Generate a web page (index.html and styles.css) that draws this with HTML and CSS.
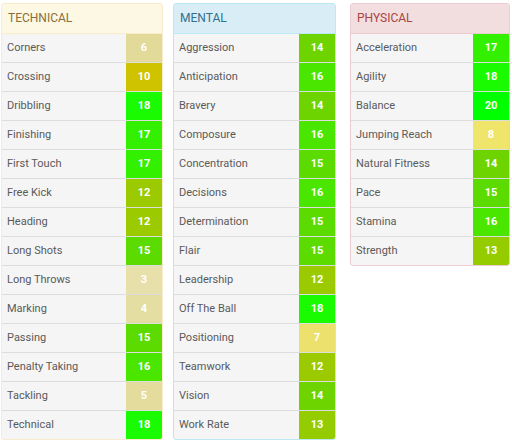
FILE: index.html
```html
<!DOCTYPE html>
<html>
<head>
<meta charset="utf-8">
<link rel="stylesheet" href="styles.css">
</head>
<body>
<div class="wrap">
  <div class="panel tech">
    <div class="head">TECHNICAL</div>
    <div class="row"><span class="lbl">Corners</span><span class="val v6">6</span></div>
    <div class="row"><span class="lbl">Crossing</span><span class="val v10">10</span></div>
    <div class="row"><span class="lbl">Dribbling</span><span class="val v18">18</span></div>
    <div class="row"><span class="lbl">Finishing</span><span class="val v17">17</span></div>
    <div class="row"><span class="lbl">First Touch</span><span class="val v17">17</span></div>
    <div class="row"><span class="lbl">Free Kick</span><span class="val v12">12</span></div>
    <div class="row"><span class="lbl">Heading</span><span class="val v12">12</span></div>
    <div class="row"><span class="lbl">Long Shots</span><span class="val v15">15</span></div>
    <div class="row"><span class="lbl">Long Throws</span><span class="val v3">3</span></div>
    <div class="row"><span class="lbl">Marking</span><span class="val v4">4</span></div>
    <div class="row"><span class="lbl">Passing</span><span class="val v15">15</span></div>
    <div class="row"><span class="lbl">Penalty Taking</span><span class="val v16">16</span></div>
    <div class="row"><span class="lbl">Tackling</span><span class="val v5">5</span></div>
    <div class="row"><span class="lbl">Technical</span><span class="val v18">18</span></div>
  </div>
  <div class="panel ment">
    <div class="head">MENTAL</div>
    <div class="row"><span class="lbl">Aggression</span><span class="val v14">14</span></div>
    <div class="row"><span class="lbl">Anticipation</span><span class="val v16">16</span></div>
    <div class="row"><span class="lbl">Bravery</span><span class="val v14">14</span></div>
    <div class="row"><span class="lbl">Composure</span><span class="val v16">16</span></div>
    <div class="row"><span class="lbl">Concentration</span><span class="val v15">15</span></div>
    <div class="row"><span class="lbl">Decisions</span><span class="val v16">16</span></div>
    <div class="row"><span class="lbl">Determination</span><span class="val v15">15</span></div>
    <div class="row"><span class="lbl">Flair</span><span class="val v15">15</span></div>
    <div class="row"><span class="lbl">Leadership</span><span class="val v12">12</span></div>
    <div class="row"><span class="lbl">Off The Ball</span><span class="val v18">18</span></div>
    <div class="row"><span class="lbl">Positioning</span><span class="val v7">7</span></div>
    <div class="row"><span class="lbl">Teamwork</span><span class="val v12">12</span></div>
    <div class="row"><span class="lbl">Vision</span><span class="val v14">14</span></div>
    <div class="row"><span class="lbl">Work Rate</span><span class="val v13">13</span></div>
  </div>
  <div class="panel phys">
    <div class="head">PHYSICAL</div>
    <div class="row"><span class="lbl">Acceleration</span><span class="val v17">17</span></div>
    <div class="row"><span class="lbl">Agility</span><span class="val v18">18</span></div>
    <div class="row"><span class="lbl">Balance</span><span class="val v20">20</span></div>
    <div class="row"><span class="lbl">Jumping Reach</span><span class="val v8">8</span></div>
    <div class="row"><span class="lbl">Natural Fitness</span><span class="val v14">14</span></div>
    <div class="row"><span class="lbl">Pace</span><span class="val v15">15</span></div>
    <div class="row"><span class="lbl">Stamina</span><span class="val v16">16</span></div>
    <div class="row"><span class="lbl">Strength</span><span class="val v13">13</span></div>
  </div>
</div>
</body>
</html>
```
FILE: styles.css
```css
* { box-sizing: border-box; }
body {
  margin: 0;
  background: #fff;
  font-family: Roboto, "Liberation Sans", sans-serif;
}
.wrap {
  display: flex;
  align-items: flex-start;
  padding: 3px 0 0 1px;
}
.panel {
  border: 1px solid #ddd;
  border-radius: 3px;
  background: #f5f5f5;
  overflow: hidden;
}
.tech { width: 162px; border-color: #faebcc; }
.ment { width: 163px; margin-left: 10px; border-color: #bce8f1; }
.phys { width: 160px; margin-left: 14px; border-color: #ebccd1; }
.head {
  height: 30px;
  line-height: 29px;
  padding-left: 6px;
  font-size: 12px;
  border-bottom: 1px solid;
}
.tech .head { background: #fcf8e3; color: #8a6d3b; border-color: #faebcc; }
.ment .head { background: #d9edf7; color: #31708f; border-color: #bce8f1; }
.phys .head { background: #f2dede; color: #a94442; border-color: #ebccd1; }
.row {
  display: flex;
  height: 29px;
  border-bottom: 1px solid #ddd;
}
.row:last-child { border-bottom: 0; height: 28px; }
.lbl {
  flex: 1;
  padding-left: 5px;
  line-height: 28px;
  font-size: 11px;
  color: #5a5a5a;
}
.val {
  width: 36px;
  text-align: center;
  line-height: 28px;
  font-size: 11px;
  font-weight: 700;
  color: #fff;
}
.v3 { background: #e8e0aa; }
.v4 { background: #e5dea2; }
.v5 { background: #e3dc9c; }
.v6 { background: #e1da98; }
.v7 { background: #ebe16c; }
.v8 { background: #efe56a; }
.v10 { background: #cfc300; }
.v12 { background: #9bca00; }
.v13 { background: #94cc00; }
.v14 { background: #6ed400; }
.v15 { background: #5cdb00; }
.v16 { background: #4ae600; }
.v17 { background: #33f000; }
.v18 { background: #1afa00; }
.v20 { background: #00ff00; }
```
